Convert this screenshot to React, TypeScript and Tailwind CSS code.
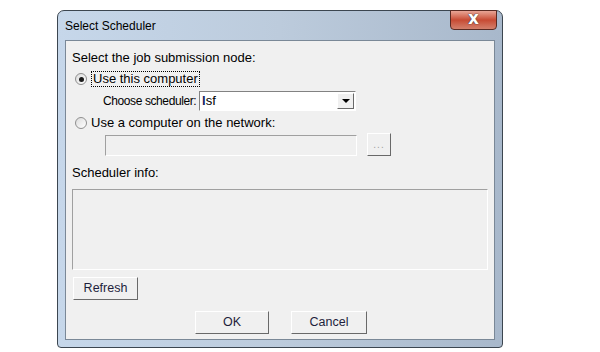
import React from "react";

const font = { fontFamily: '"Liberation Sans", Arial, sans-serif' };

function Radio({ checked }: { checked?: boolean }) {
  return (
    <div className="w-[12px] h-[12px] rounded-full border border-[#8f8f8f] bg-gradient-to-br from-[#dcdcdc] to-white flex items-center justify-center shrink-0">
      {checked && <div className="w-[5px] h-[5px] rounded-full bg-[#1a1a1a]" />}
    </div>
  );
}

function Btn({ children, className }: { children: React.ReactNode; className?: string }) {
  return (
    <div
      className={
        "h-[23px] bg-[#f0f0f0] border border-t-white border-l-white border-b-[#696969] border-r-[#696969] flex items-center justify-center text-[12.5px] text-[#1e1e3c] " +
        (className ?? "")
      }
    >
      {children}
    </div>
  );
}

export default function App() {
  return (
    <div className="w-[600px] h-[352px] bg-white pl-[57px] pt-[10px]" style={font}>
      <div className="relative w-[446px] h-[338px] rounded-t-[7px] rounded-b-[4px] border border-[#3c4650] bg-gradient-to-r from-[#c6d7ea] via-[#bccbdc] to-[#a8b8cb] flex flex-col px-[7px] pb-[7px]">
        {/* title bar */}
        <div className="h-[29px] flex items-center text-[12px] text-black whitespace-nowrap">Select Scheduler</div>
        <div className="absolute right-[5px] top-[-1px] w-[47px] h-[20px] rounded-b-[4px] border border-[#5a2a22] bg-gradient-to-b from-[#e8a596] via-[#c74a33] to-[#d3806c] flex items-center justify-center">
          <span
            className="text-white font-bold text-[17px] leading-none -mt-[3px]"
            style={{ fontFamily: '"DejaVu Sans", sans-serif', textShadow: "0 0 1px #333, 0 0 1px #333" }}
          >
            x
          </span>
        </div>
        {/* client */}
        <div className="flex-1 border border-[#7a8897] bg-[#f0f0f0] flex flex-col text-[13px] text-black relative whitespace-nowrap">
          <div className="pl-[6px] pt-[9px] leading-[16px]">Select the job submission node:</div>
          <div className="flex items-center pl-[9px] mt-[5px] h-[16px]">
            <Radio checked />
            <span className="ml-[4px] px-[1px] border border-dotted border-black leading-[14px]">Use this computer</span>
          </div>
          <div className="flex items-center mt-[4px] h-[20px] pl-[37px]">
            <span className="w-[96px] shrink-0 text-[12px] tracking-[-0.4px]">Choose scheduler:</span>
            <div className="w-[157px] h-[20px] shrink-0 bg-white border border-t-[#828282] border-l-[#828282] border-b-white border-r-white flex items-center">
              <span className="pl-[2px] flex-1 text-[13px]">
                <span className="text-[#102060] font-bold">l</span>sf
              </span>
              <div className="w-[17px] h-[16px] mr-[1px] bg-[#f0f0f0] border border-t-white border-l-white border-b-[#696969] border-r-[#696969] flex items-center justify-center">
                <div className="w-0 h-0 border-l-[4px] border-r-[4px] border-t-[4px] border-l-transparent border-r-transparent border-t-black" />
              </div>
            </div>
          </div>
          <div className="flex items-center pl-[9px] mt-[4px] h-[16px]">
            <Radio />
            <span className="ml-[4px]">Use a computer on the network:</span>
          </div>
          <div className="flex items-center pl-[39px] mt-[4px] gap-[10px]">
            <div className="w-[252px] h-[21px] bg-[#f0f0f0] border border-t-[#a0a0a0] border-l-[#a0a0a0] border-b-white border-r-white" />
            <div className="w-[24px] h-[23px] -mt-[2px] bg-[#f0f0f0] border border-t-white border-l-white border-b-[#696969] border-r-[#696969] flex items-end justify-center pb-[5px] text-[#a0a0a0] text-[10px] leading-none tracking-[1px]">
              ...
            </div>
          </div>
          <div className="pl-[6px] mt-[9px] leading-[16px]">Scheduler info:</div>
          <div className="ml-[6px] mt-[8px] w-[416px] h-[81px] border border-t-[#a0a0a0] border-l-[#a0a0a0] border-b-white border-r-white bg-[#f0f0f0]" />
          <Btn className="ml-[7px] mt-[7px] w-[65px]">Refresh</Btn>
          <div className="flex mt-[11px] pl-[129px] gap-[22px]">
            <Btn className="w-[74px] border-r-[#505050] border-b-[#505050]">OK</Btn>
            <Btn className="w-[76px]">Cancel</Btn>
          </div>
        </div>
      </div>
    </div>
  );
}
